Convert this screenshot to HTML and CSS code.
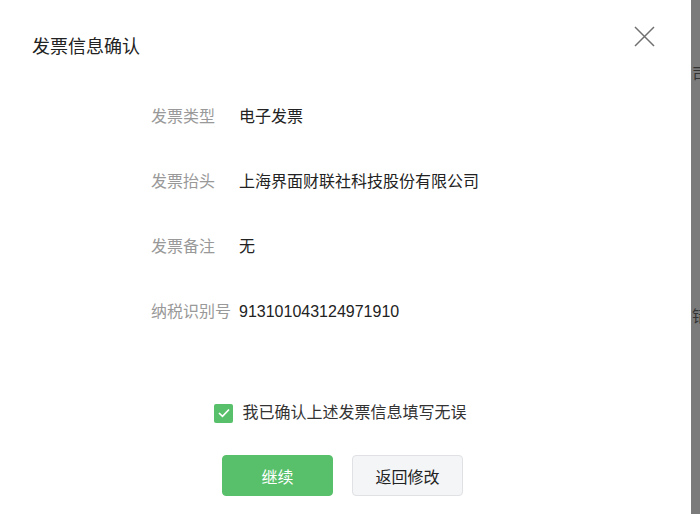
FILE: index.html
```html
<!DOCTYPE html>
<html lang="zh-CN">
<head>
<meta charset="utf-8">
<title>发票信息确认</title>
<link rel="stylesheet" href="styles.css">
</head>
<body>
<div class="page">
  <div class="modal">
    <div class="header">
      <h1 class="title">发票信息确认</h1>
      <button class="close" aria-label="关闭">
        <svg width="21" height="21" viewBox="0 0 21 21"><path d="M1 1L20 20M20 1L1 20" stroke="#707070" stroke-width="1.5" fill="none"/></svg>
      </button>
    </div>
    <div class="rows">
      <div class="row"><span class="label">发票类型</span><span class="value">电子发票</span></div>
      <div class="row"><span class="label">发票抬头</span><span class="value">上海界面财联社科技股份有限公司</span></div>
      <div class="row"><span class="label">发票备注</span><span class="value">无</span></div>
      <div class="row"><span class="label">纳税识别号</span><span class="value">913101043124971910</span></div>
    </div>
    <label class="confirm">
      <span class="checkbox">
        <svg width="12" height="10" viewBox="0 0 12 10"><path d="M1 5L4.5 8.3L11 1.5" stroke="#fff" stroke-width="1.7" fill="none"/></svg>
      </span>
      <span class="confirm-text">我已确认上述发票信息填写无误</span>
    </label>
    <div class="actions">
      <button class="btn btn-primary">继续</button>
      <button class="btn btn-default">返回修改</button>
    </div>
  </div>
  <div class="backdrop">
    <span class="bg-glyph g1">司</span>
    <span class="bg-glyph g2">错</span>
  </div>
</div>
</body>
</html>
```
FILE: styles.css
```css
html, body {
  margin: 0;
  padding: 0;
  width: 700px;
  height: 514px;
  overflow: hidden;
  background: #7b7b7b;
  font-family: "Liberation Sans", "Noto Sans CJK SC", sans-serif;
}
.page {
  display: flex;
  width: 700px;
  height: 514px;
  background: #7b7b7b;
}
.modal {
  position: relative;
  flex: 0 0 auto;
  width: 691px;
  height: 514px;
  background: #fff;
  display: flex;
  flex-direction: column;
}
.header {
  padding: 35px 0 0 32px;
  height: 24px;
}
.title {
  margin: 0;
  font-size: 18px;
  line-height: 24px;
  font-weight: normal;
  color: #222;
}
.close {
  position: absolute;
  left: 634px;
  top: 26px;
  width: 21px;
  height: 21px;
  padding: 0;
  border: 0;
  background: none;
  display: flex;
}
.rows {
  margin-top: 25px;
  padding-left: 151px;
  display: flex;
  flex-direction: column;
}
.row {
  height: 65px;
  display: flex;
  align-items: center;
  font-size: 16px;
  line-height: 22px;
}
.label {
  width: 88px;
  color: #999;
  white-space: nowrap;
}
.value {
  color: #222;
}
.confirm {
  margin-top: 59px;
  display: flex;
  align-items: center;
  justify-content: center;
  gap: 9px;
  padding-right: 10px;
  height: 20px;
}
.checkbox {
  width: 19px;
  height: 19px;
  border-radius: 2px;
  background: #58bf6b;
  display: flex;
  align-items: center;
  justify-content: center;
}
.confirm-text {
  font-size: 16px;
  line-height: 20px;
  color: #333;
}
.actions {
  margin-top: 32px;
  display: flex;
  justify-content: center;
  gap: 19px;
  padding-right: 6px;
}
.btn {
  width: 111px;
  height: 41px;
  border-radius: 4px;
  font-size: 16px;
  font-family: inherit;
  padding: 0;
}
.btn-primary {
  background: #58bf6b;
  border: 1px solid #58bf6b;
  color: #fff;
}
.btn-default {
  background: #f4f5f7;
  border: 1px solid #dfe1e4;
  color: #222;
}
.backdrop {
  position: relative;
  flex: 1 0 9px;
  height: 514px;
  background-color: #7b7b7b;
  overflow: hidden;
}
.bg-glyph {
  position: absolute;
  left: 1px;
  font-size: 16px;
  line-height: 16px;
  color: #333;
  white-space: nowrap;
}
.g1 { top: 67px; }
.g2 { top: 309px; }
```
